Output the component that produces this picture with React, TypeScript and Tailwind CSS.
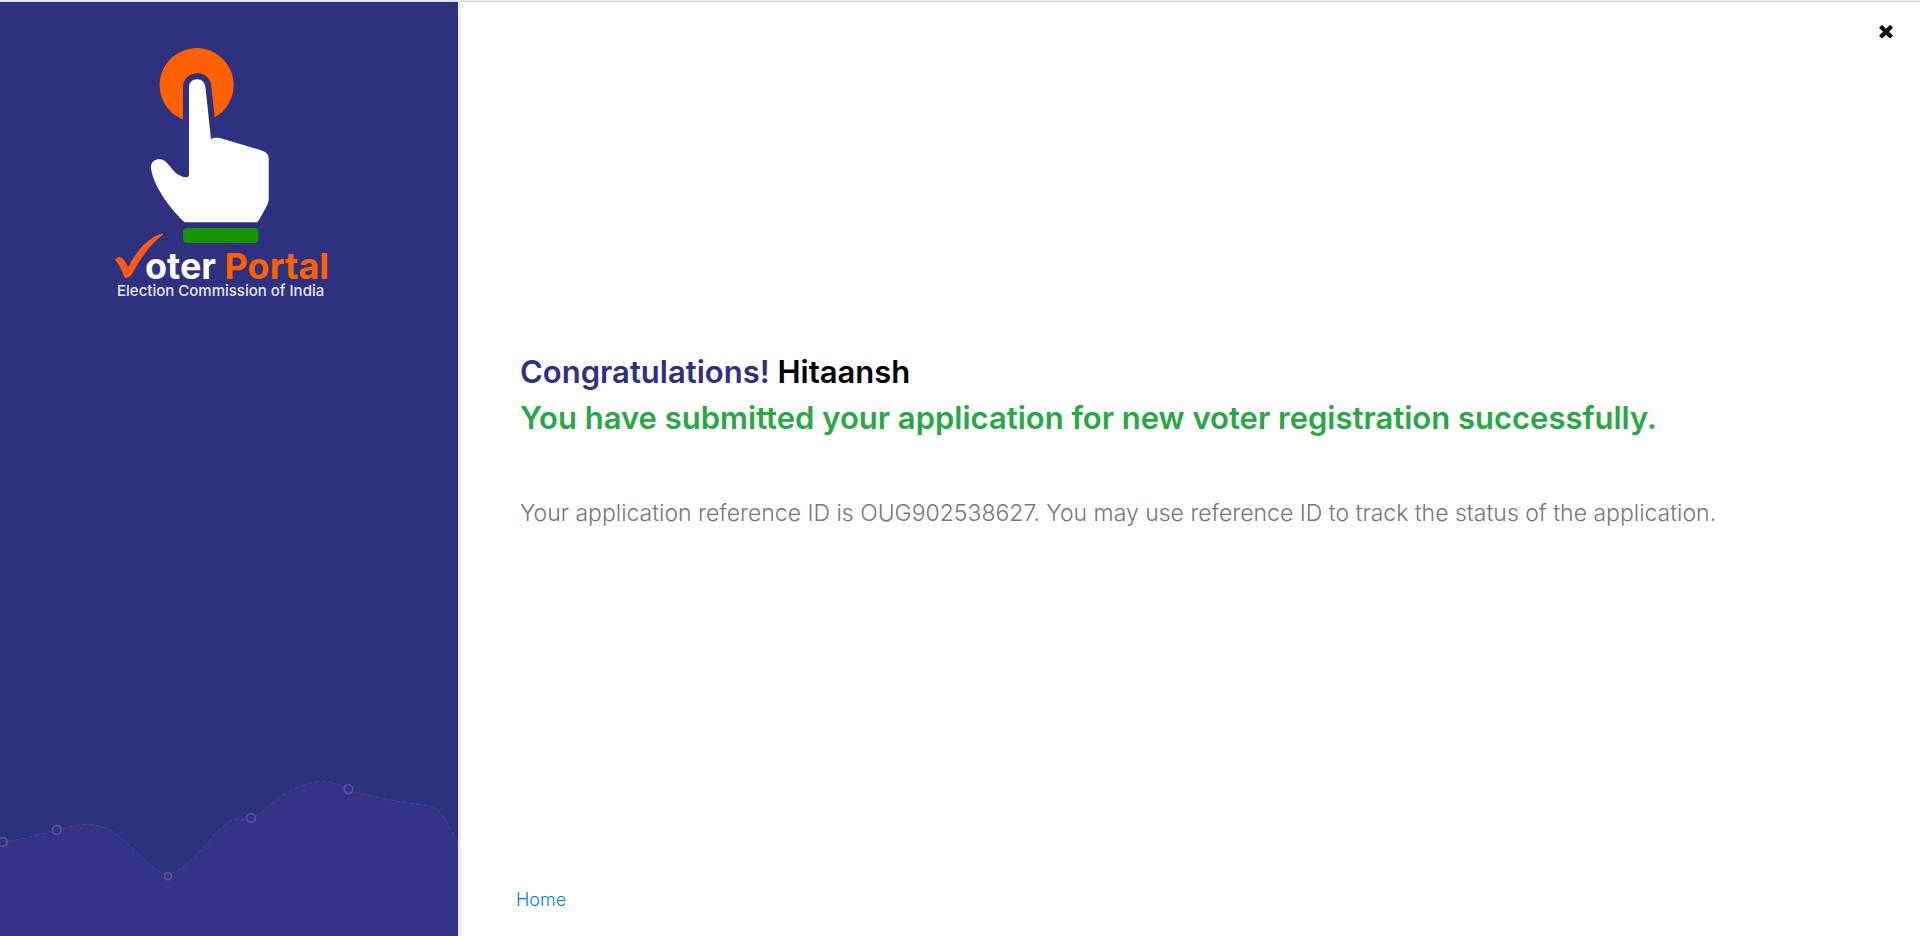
function Logo() {
  return (
    <svg
      viewBox="110 40 230 262"
      className="ml-[110px] mt-[38px] h-[262px] w-[230px] shrink-0"
      role="img"
      aria-label="Voter Portal, Election Commission of India"
    >
      <path
        fill="#ff6000"
        d="M183 119.500A37 37 0 1 1 214.700 117.400L211.500 88C211 78.500 205.500 73.300 197.500 73.300C189 73.300 183 79 183 87.500Z"
      />
      <path
        fill="#fff"
        d="M189 87.300C189 82.500 192.500 79.300 197.200 79.300C202 79.300 205 82.600 205.500 88L211 139.300C214 137.600 218.500 137.300 223.300 138.900L261.700 150.400C266.500 152 268.700 154.500 268.700 159V198C268.700 201.500 268 203.500 266.300 206.700C263.500 212 260.500 217.500 257.300 222.300H184.500C168 206.500 153 184.500 151 168.300C150.200 161.500 156 158.500 160.500 159.300C164.500 160 167 162.500 170.500 167C175 173 179.500 176.600 186 177.300C188 177.400 189 176.500 189 174.500Z"
      />
      <rect x="183" y="228" width="75.500" height="15" rx="4" fill="#159500" />
      <path
        fill="#ff5a14"
        d="M115 259.700C116.500 257.500 118.500 256.700 120.500 257.200C123.500 258 125 261.500 128.300 267C136 251.500 148 237.500 162.500 233.300L163.200 234.500C151.500 243 142 256 134 270.500L131.300 275.300C129.500 276.500 127.500 278 125 278.300C122.500 272 119.500 264.500 115 259.700Z"
      />
      <text
        x="145"
        y="279"
        className="fill-white font-['Inter',sans-serif] text-[36px] font-bold"
      >
        oter <tspan className="fill-[#ff6000]">Portal</tspan>
      </text>
      <text
        x="117"
        y="296"
        className="fill-[#e6e6f2] font-['Inter',sans-serif] text-[15px] font-medium"
      >
        Election Commission of India
      </text>
    </svg>
  );
}

function CloseIcon() {
  return (
    <svg viewBox="0 0 1792 1792" className="size-5" aria-hidden="true">
      <path
        fill="currentColor"
        d="M1490 1322q0 40-28 68l-136 136q-28 28-68 28t-68-28l-294-294-294 294q-28 28-68 28t-68-28l-136-136q-28-28-28-68t28-68l294-294-294-294q-28-28-28-68t28-68l136-136q28-28 68-28t68 28l294 294 294-294q28-28 68-28t68 28l136 136q28 28 28 68t-28 68l-294 294 294 294q28 28 28 68z"
      />
    </svg>
  );
}

const CURVE =
  "M0 842C22 840 38 835 56 830C70 826 80 824.500 88 824.500C108 825 118 835 130 846C146 861 156 873 168 874C182 872 200 852 212 838C222 826 230 819 238 819C243 819 247 820 251 818C262 814 270 804 280 797C294 788 308 781.500 322 781.500C334 781.500 341 786 348 789C374 798 400 802 430 806C443 808 447 826 458 842";

const MARKERS = [
  { x: 2.7, y: 842, r: 4.3 },
  { x: 56.7, y: 830, r: 4.3 },
  { x: 168, y: 876.3, r: 3.4 },
  { x: 251, y: 818, r: 4.3 },
  { x: 348.5, y: 789, r: 4.3 },
];

function WaveChart() {
  return (
    <svg
      viewBox="0 776 458 160"
      className="mt-auto w-full"
      aria-hidden="true"
    >
      <path d={CURVE + "V936H0Z"} fill="#353386" />
      <path
        d={CURVE}
        fill="none"
        stroke="#46449a"
        strokeWidth="1"
        strokeDasharray="5 2"
      />
      {MARKERS.map((m) => (
        <circle
          key={m.x}
          cx={m.x}
          cy={m.y}
          r={m.r}
          fill="#323185"
          stroke="#5755a3"
          strokeWidth="1.800"
        />
      ))}
    </svg>
  );
}

export default function App() {
  return (
    <div className="flex min-h-screen flex-col border-t border-[#eeeeee] bg-white font-['Inter',sans-serif]">
      <div className="flex flex-1 border-t border-[#d4d4d4]">
        <aside className="flex w-[461px] shrink-0 flex-col border-r-3 border-[#f0f0f0] bg-[#2e3080]">
          <Logo />
          <WaveChart />
        </aside>
        <main className="flex flex-1 flex-col">
          <button
            type="button"
            aria-label="Close"
            className="mr-6 mt-[19px] flex size-5 items-center justify-center self-end text-[#111111]"
          >
            <CloseIcon />
          </button>
          <div className="my-auto pb-12 pl-[59px] pr-6">
            <h1 className="text-[31px] font-semibold leading-[46px] text-[#2e3080]">
              Congratulations! <span className="text-black">Hitaansh</span>
            </h1>
            <h2 className="text-[31px] font-semibold leading-[46px] text-[#28a745]">
              You have submitted your application for new voter registration
              successfully.
            </h2>
            <p className="mt-[54px] text-[23px] font-light leading-[36px] text-[#777777]">
              Your application reference ID is OUG902538627. You may use
              reference ID to track the status of the application.
            </p>
          </div>
          <a
            href="#home"
            className="mb-[22px] ml-[55px] self-start text-[18px] font-light leading-7 text-[#007bff]"
          >
            Home
          </a>
        </main>
      </div>
    </div>
  );
}
